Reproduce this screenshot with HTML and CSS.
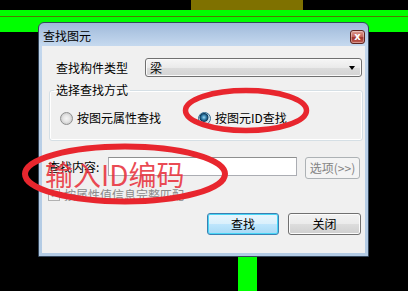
FILE: index.html
```html
<!DOCTYPE html>
<html>
<head>
<meta charset="utf-8">
<link rel="stylesheet" href="styles.css">
</head>
<body>
<div class="scene">
  <div class="olive"></div>
  <div class="hbar"><div class="hline"></div></div>
  <div class="vbar"></div>

  <div class="dialog">
    <div class="titlebar">
      <span class="title">查找图元</span>
      <span class="close">x</span>
    </div>
    <div class="client">
      <div class="row-type">
        <span class="lbl-type">查找构件类型</span>
        <div class="combo"><span class="combo-val">梁</span><span class="combo-arrow"></span></div>
      </div>

      <fieldset class="group">
        <legend class="legend">选择查找方式</legend>
        <div class="radios">
          <label class="radio"><span class="rb"></span><span>按图元属性查找</span></label>
          <label class="radio radio-2"><span class="rb rb-on"></span><span>按图元ID查找</span></label>
        </div>
      </fieldset>

      <div class="row-query">
        <span class="lbl-query">查找内容:</span>
        <div class="input"></div>
        <div class="btn-opt">选项(>>)</div>
      </div>

      <div class="row-check">
        <span class="cb">&#10003;</span>
        <span class="cb-text">按属性值信息完整匹配</span>
      </div>

      <div class="row-buttons">
        <div class="btn btn-default">查找</div>
        <div class="btn">关闭</div>
      </div>
    </div>
  </div>

  <svg class="marks" width="408" height="291" viewBox="0 0 408 291">
    <ellipse cx="246" cy="110.5" rx="60.5" ry="20" fill="none" stroke="#e8262e" stroke-width="5.5"/>
    <ellipse cx="125" cy="174" rx="100" ry="27.5" fill="none" stroke="#e8262e" stroke-width="6"/>
  </svg>
  <div class="note">输入ID编码</div>
</div>
</body>
</html>
```
FILE: styles.css
```css
html, body {
  margin: 0;
  padding: 0;
  background: #000;
}
body {
  width: 408px;
  height: 291px;
  overflow: hidden;
  font-family: "Noto Sans CJK SC", "Noto Sans", sans-serif;
  font-size: 12px;
  color: #000;
}
.scene {
  position: relative;
  width: 408px;
  height: 291px;
}
.olive {
  margin-left: 191px;
  width: 112px;
  height: 10px;
  background: #7f7100;
}
.hbar {
  height: 22px;
  background: #00ff00;
  padding-top: 6px;
  box-sizing: border-box;
}
.hline {
  height: 1px;
  background: #4f7a00;
}
.vbar {
  position: absolute;
  left: 238px;
  top: 257px;
  width: 19px;
  height: 34px;
  background: #00ff00;
}

/* dialog window */
.dialog {
  position: absolute;
  left: 38px;
  top: 22px;
  width: 331px;
  height: 235px;
  box-sizing: border-box;
  border: 1px solid #34465a;
  border-radius: 6px 6px 0 0;
  background: linear-gradient(#9fb9da, #c4d8ee 22px, #bcd1e8 60px, #b3cbe4);
  padding: 0 3px 3px 3px;
  display: flex;
  flex-direction: column;
}
.titlebar {
  height: 23px;
  display: flex;
  align-items: center;
  justify-content: space-between;
  padding-left: 1px;
  padding-right: 0;
}
.title {
  font-size: 12px;
  line-height: 14px;
  margin-top: 2px;
  color: #000;
}
.close {
  width: 15px;
  height: 14px;
  box-sizing: border-box;
  margin-top: 4px;
  border: 1px solid #5e2520;
  border-radius: 3px;
  background: linear-gradient(#dc9a90, #c46458 50%, #a0342b 55%, #c26054);
  color: #fff;
  font-family: "DejaVu Sans", sans-serif;
  font-weight: bold;
  font-size: 10px;
  line-height: 11px;
  text-align: center;
  box-shadow: inset 0 0 0 1px rgba(255,255,255,0.35);
}
.client {
  height: 207px;
  background: #f0f0f0;
  display: flex;
  flex-direction: column;
  padding-top: 12px;
  box-sizing: border-box;
}

/* row 1 */
.row-type {
  display: flex;
  align-items: center;
  margin-left: 14px;
  height: 19px;
}
.lbl-type {
  width: 89px;
  line-height: 19px;
}
.combo {
  width: 217px;
  height: 19px;
  box-sizing: border-box;
  border: 1px solid #707070;
  border-radius: 3px;
  background: linear-gradient(#f6f6f6, #eaeaea 50%, #dcdcdc 51%, #d4d4d4);
  display: flex;
  align-items: center;
  justify-content: space-between;
  padding: 0 6px 0 4px;
  box-shadow: inset 0 0 0 1px #fafafa;
}
.combo-val {
  line-height: 16px;
}
.combo-arrow {
  width: 0;
  height: 0;
  border-left: 3.5px solid transparent;
  border-right: 3.5px solid transparent;
  border-top: 4px solid #000;
  margin-top: 1px;
}

/* group box */
.group {
  margin: 6px 2px 0 7px;
  padding: 11px 4px 12px 4px;
  border: 1px solid #d5dfe5;
  border-radius: 3px;
  box-shadow: inset 0 0 0 1px #fff;
  min-width: 0;
}
.legend {
  padding: 0 2px;
  line-height: 14px;
  height: 14px;
}
.radios {
  display: flex;
  align-items: center;
  height: 20px;
}
.radio {
  display: flex;
  align-items: center;
  gap: 4px;
  margin-left: 6px;
  line-height: 16px;
}
.radio-2 {
  margin-left: 37px;
}
.rb {
  width: 13px;
  height: 13px;
  box-sizing: border-box;
  border-radius: 50%;
  border: 1px solid #8e8f8f;
  background: radial-gradient(circle at 50% 50%, #f4f4f4 0, #e6e6e6 40%, #d0d0d0 70%, #f0f0f0 100%);
}
.rb-on {
  border-color: #2f6b91;
  background: radial-gradient(circle at 45% 40%, #9fd7ef 0, #3f8cb8 22%, #0d3a5c 45%, #c8dde8 55%, #f3f7fa 100%);
}

/* query row */
.row-query {
  display: flex;
  align-items: flex-start;
  margin-top: 16px;
  margin-left: 6px;
  height: 22px;
}
.lbl-query {
  width: 60px;
  line-height: 19px;
}
.input {
  width: 189px;
  height: 19px;
  box-sizing: border-box;
  border: 1px solid #abadb3;
  border-top-color: #8e8f8f;
  background: #fff;
}
.btn-opt {
  margin-left: 8px;
  width: 55px;
  height: 22px;
  box-sizing: border-box;
  border: 1px solid #adb2b5;
  border-radius: 3px;
  background: #f4f4f4;
  color: #838383;
  text-align: center;
  line-height: 20px;
  font-size: 12px;
}

/* checkbox row */
.row-check {
  display: flex;
  align-items: center;
  margin-top: 10px;
  margin-left: 6px;
  height: 12px;
  gap: 2px;
}
.cb {
  width: 12px;
  height: 12px;
  box-sizing: border-box;
  border: 1px solid #b1b1b1;
  background: #f4f4f4;
  color: #a0a0a0;
  font-family: "DejaVu Sans", sans-serif;
  font-size: 9px;
  line-height: 10px;
  text-align: center;
}
.cb-text {
  color: #8a8a8a;
  line-height: 12px;
  margin-left: 2px;
}

/* bottom buttons */
.row-buttons {
  display: flex;
  justify-content: flex-end;
  gap: 9px;
  margin-top: 12px;
  padding-right: 4px;
}
.btn {
  width: 73px;
  height: 22px;
  box-sizing: border-box;
  border: 1px solid #707070;
  border-radius: 3px;
  background: linear-gradient(#f2f2f2, #ebebeb 50%, #dddddd 51%, #cfcfcf);
  box-shadow: inset 0 0 0 1px #fcfcfc;
  text-align: center;
  line-height: 20px;
}
.btn-default {
  width: 72px;
  border-color: #3c7fb1;
  background: linear-gradient(#eaf6fd, #d9f0fc 50%, #bee6fd 51%, #a7d9f5);
  box-shadow: inset 0 0 0 1px #48d6f6;
}

/* annotations */
.marks {
  position: absolute;
  left: 0;
  top: 0;
}
.note {
  position: absolute;
  left: 45px;
  top: 157px;
  font-family: "Noto Sans CJK SC", sans-serif;
  font-size: 28px;
  line-height: 34px;
  color: rgba(232, 50, 60, 0.88);
  white-space: nowrap;
}
```
